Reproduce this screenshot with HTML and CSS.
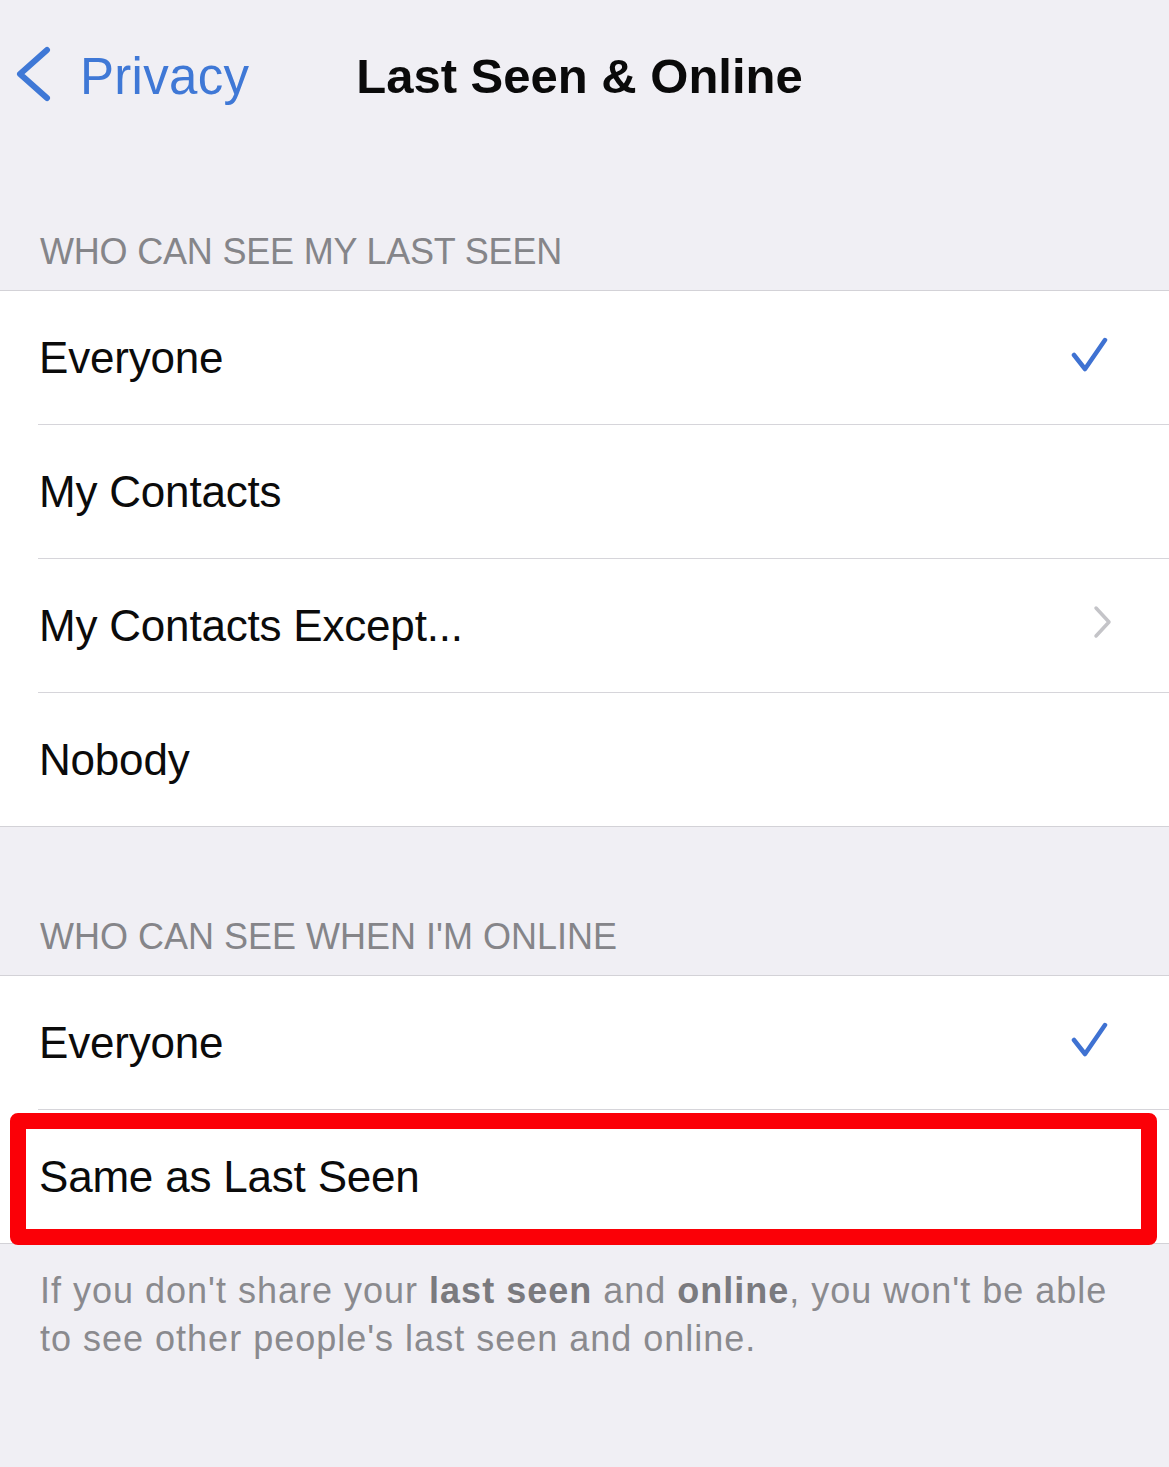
FILE: index.html
```html
<!DOCTYPE html>
<html>
<head>
<meta charset="utf-8">
<link rel="stylesheet" href="styles.css">
</head>
<body>
<div class="screen">
  <header class="nav">
    <div class="back">
      <svg class="back-icon" width="40" height="60" viewBox="0 0 40 60"><polyline points="32,4 5,28 32,52" fill="none" stroke="#3f78d6" stroke-width="6" stroke-linecap="round" stroke-linejoin="round"/></svg>
      <span class="back-label">Privacy</span>
    </div>
    <h1 class="title">Last Seen &amp; Online</h1>
    <div></div>
  </header>

  <div class="section-header first">WHO CAN SEE MY LAST SEEN</div>
  <div class="group">
    <div class="row"><div class="row-inner"><span class="label">Everyone</span>
      <svg class="check" width="40" height="40" viewBox="0 0 40 40"><polyline points="5,18 16,32 36,3" fill="none" stroke="#3f72d2" stroke-width="4.5" stroke-linecap="round" stroke-linejoin="round"/></svg></div></div>
    <div class="row"><div class="row-inner"><span class="label">My Contacts</span></div></div>
    <div class="row"><div class="row-inner"><span class="label">My Contacts Except...</span>
      <svg class="chev" width="24" height="36" viewBox="0 0 24 36"><polyline points="4,3 17,17 4,31" fill="none" stroke="#c4c4c8" stroke-width="3.5" stroke-linecap="round" stroke-linejoin="round"/></svg></div></div>
    <div class="row"><div class="row-inner last"><span class="label">Nobody</span></div></div>
  </div>

  <div class="section-header second">WHO CAN SEE WHEN I'M ONLINE</div>
  <div class="group">
    <div class="row"><div class="row-inner"><span class="label">Everyone</span>
      <svg class="check" width="40" height="40" viewBox="0 0 40 40"><polyline points="5,18 16,32 36,3" fill="none" stroke="#3f72d2" stroke-width="4.5" stroke-linecap="round" stroke-linejoin="round"/></svg></div></div>
    <div class="row highlighted"><div class="row-inner last"><span class="label">Same as Last Seen</span></div><div class="red-box"></div></div>
  </div>

  <p class="footer">If you don't share your <b>last seen</b> and <b>online</b>, you won't be able to see other people's last seen and online.</p>
</div>
</body>
</html>
```

FILE: styles.css
```css
html, body {
  margin: 0;
  padding: 0;
  background: #f0eff4;
}
body {
  font-family: "Liberation Sans", Arial, sans-serif;
  width: 1169px;
  height: 1467px;
  overflow: hidden;
}
.screen {
  background: #f0eff4;
  height: 1467px;
}
.nav {
  height: 152px;
  display: grid;
  grid-template-columns: 1fr auto 1fr;
  align-items: center;
  padding-right: 10px;
}
.back {
  display: flex;
  align-items: center;
  padding-left: 15px;
  gap: 25px;
}
.back-icon {
  display: block;
}
.back-label {
  font-size: 51px;
  color: #3f78d6;
  letter-spacing: 0.3px;
}
.title {
  margin: 0;
  font-size: 49px;
  font-weight: 700;
  color: #0a0a0a;
  letter-spacing: 0px;
}
.section-header {
  font-size: 36px;
  line-height: 44px;
  color: #858589;
  padding: 0 40px 16px;
  letter-spacing: -0.2px;
}
.section-header.first {
  padding-top: 78px;
}
.section-header.second {
  padding-top: 88px;
  letter-spacing: 0px;
}
.group {
  background: #fff;
  border-top: 1px solid #d3d2d7;
  border-bottom: 1px solid #d3d2d7;
}
.row {
  padding-left: 38px;
}
.row-inner {
  height: 133px;
  border-bottom: 1px solid #d6d5da;
  display: flex;
  align-items: center;
  justify-content: space-between;
  padding-right: 60px;
}
.row-inner.last {
  border-bottom: none;
}
.label {
  font-size: 44px;
  color: #0b0b0b;
  letter-spacing: -0.2px;
  padding-left: 1px;
}
.check {
  display: block;
  margin-top: -2px;
}
.chev {
  display: block;
  margin-right: -7px;
  margin-top: -6px;
}
.highlighted {
  position: relative;
}
.red-box {
  position: absolute;
  left: 10px;
  right: 12px;
  top: 3px;
  bottom: -2px;
  border: 16px solid #fb0007;
  border-radius: 8px;
  box-sizing: border-box;
}
.footer {
  margin: 0;
  padding: 23px 50px 0 40px;
  font-size: 36px;
  line-height: 48px;
  color: #8a8a8e;
  letter-spacing: 1px;
}
.footer b {
  font-weight: 700;
  color: #7a7a7e;
}
```
